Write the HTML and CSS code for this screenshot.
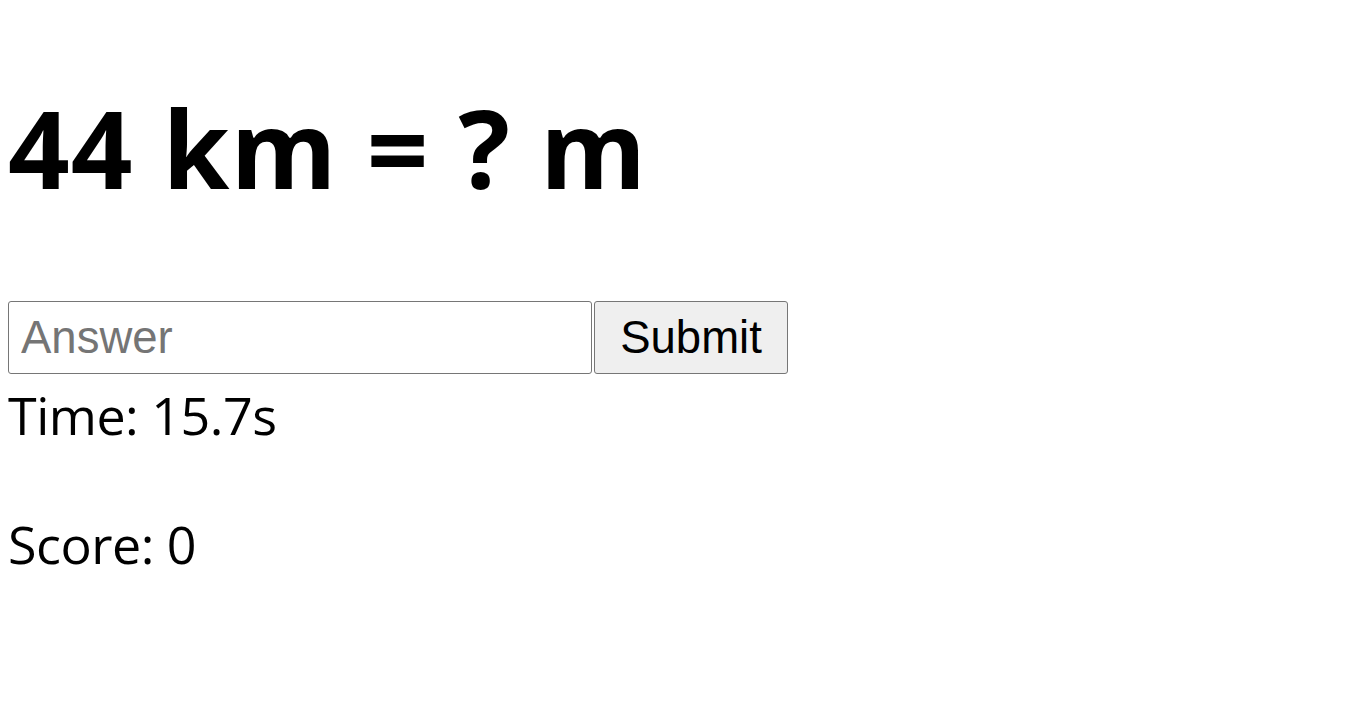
FILE: index.html
```html
<!DOCTYPE html>
<html lang="en">
<head>
<meta charset="utf-8">
<title>Unit Quiz</title>
<link rel="stylesheet" href="styles.css">
</head>
<body>
<main class="quiz">
  <h1 class="question">44 km = ? m</h1>
  <form class="answer-row" onsubmit="return false;">
    <input class="answer-input" type="text" placeholder="Answer">
    <button class="submit-btn" type="submit">Submit</button>
  </form>
  <p class="stat time">Time: 15.7s</p>
  <p class="stat score">Score: 0</p>
</main>
</body>
</html>
```

FILE: styles.css
```css
html, body {
  margin: 0;
  padding: 0;
  background: #ffffff;
}

.quiz {
  display: flex;
  flex-direction: column;
  align-items: flex-start;
  padding-left: 8px;
  font-family: "Open Sans", "Noto Sans", sans-serif;
  color: #000000;
}

.question {
  margin: 94px 0 0 0;
  font-size: 108px;
  line-height: 108px;
  font-weight: 700;
  letter-spacing: 1px;
}

.answer-row {
  display: flex;
  align-items: stretch;
  gap: 2px;
  margin: 99px 0 0 0;
}

.answer-input {
  box-sizing: border-box;
  width: 584px;
  height: 73px;
  margin: 0;
  padding: 0 12px;
  border: 1px solid #767676;
  border-radius: 3px;
  font-family: "Liberation Sans", Arial, sans-serif;
  font-size: 45.5px;
  color: #000;
  background: #fff;
  outline: none;
}

.answer-input::placeholder {
  color: #757575;
}

.submit-btn {
  box-sizing: border-box;
  width: 194px;
  height: 73px;
  margin: 0;
  padding: 0;
  border: 1px solid #767676;
  border-radius: 3px;
  background: #efefef;
  font-family: "Liberation Sans", Arial, sans-serif;
  font-size: 45.5px;
  color: #000;
  display: flex;
  align-items: center;
  justify-content: center;
}

.stat {
  margin: 0;
  font-size: 52px;
  line-height: 52px;
  font-weight: 400;
  letter-spacing: -0.5px;
}

.time {
  margin-top: 15px;
}

.score {
  margin-top: 77px;
}
```
